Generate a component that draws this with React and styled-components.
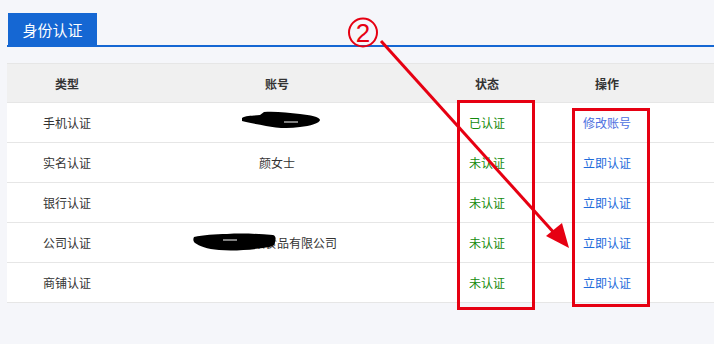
import React from 'react'
import styled, { createGlobalStyle } from 'styled-components'

const GlobalStyle = createGlobalStyle`
  html, body {
    margin: 0;
    padding: 0;
    background: #f5f6fa;
    font-family: "Noto Sans CJK SC", "Noto Sans", sans-serif;
  }
`

const Page = styled.div`
  position: relative;
  width: 714px;
  height: 344px;
  overflow: hidden;
  padding: 13px 0 0 7px;
  box-sizing: border-box;
`

const TabBar = styled.div`
  display: flex;
  border-bottom: 2px solid #1567d3;
`

const Tab = styled.div`
  width: 89px;
  height: 32px;
  margin-left: 1px;
  background: #1567d3;
  color: #fff;
  font-size: 15px;
  display: flex;
  align-items: center;
  justify-content: center;
`

const Table = styled.div`
  margin-top: 16px;
  width: 720px;
`

const Row = styled.div`
  display: grid;
  grid-template-columns: 120px 300px 120px 120px 1fr;
  height: 40px;
  align-items: center;
  background: ${p => (p.$head ? '#f0f0f0' : '#fff')};
  border-top: ${p => (p.$head ? '1px solid #e6e6e6' : 'none')};
  border-bottom: 1px solid #e6e6e6;
  box-sizing: border-box;
  font-size: 12px;
  font-weight: ${p => (p.$head ? 700 : 400)};
  color: #333;
`

const Cell = styled.div`
  text-align: center;
  position: relative;
  color: ${p => p.$color || 'inherit'};
`

const Hidden = styled.span`
  position: relative;
  display: inline-block;
`

const Blot = styled.svg`
  position: absolute;
  left: ${p => p.$left}px;
  top: ${p => p.$top}px;
`

const Overlay = styled.svg`
  position: absolute;
  left: 0;
  top: 0;
  pointer-events: none;
`

const GREEN = '#138a0c'
const BLUE = '#1d6bdb'

const rows = [
  { type: '手机认证', account: 'phone', state: '已认证', action: '修改账号', actionColor: '#4d6fe0' },
  { type: '实名认证', account: '颜女士', state: '未认证', action: '立即认证' },
  { type: '银行认证', account: '', state: '未认证', action: '立即认证' },
  { type: '公司认证', account: 'company', state: '未认证', action: '立即认证' },
  { type: '商铺认证', account: '', state: '未认证', action: '立即认证' },
]

const Account = ({ value }) => {
  if (value === 'phone') {
    return (
      <Hidden>
        <span style={{ color: '#fff' }}>18900000000</span>
        <Blot $left={0} $top={-4} width="82" height="20" viewBox="0 0 82 20">
          <path d="M2 8 C6 5 14 6 20 5 L24 2 C36 1 48 3 60 4 C70 5 80 7 80 10 C80 13 70 16 60 17 C48 19 36 18 26 16 C18 14 8 13 2 11 Z" fill="#000" />
          <path d="M44 12 L58 12" stroke="#fff" strokeWidth="1" />
        </Blot>
      </Hidden>
    )
  }
  if (value === 'company') {
    return (
      <Hidden>
        某某某某食品有限公司
        <Blot $left={-24} $top={-2} width="84" height="20" viewBox="0 0 84 20">
          <path d="M1 5 C10 3 22 2 34 2 C50 1 66 2 80 3 C83 4 83 7 82 10 C82 14 78 15 70 16 C56 18 40 19 26 18 C14 17 6 14 2 11 C0 9 0 7 1 5 Z" fill="#000" />
          <path d="M30 8 L44 8" stroke="#fff" strokeWidth="1" />
        </Blot>
      </Hidden>
    )
  }
  return value
}

export default function App() {
  return (
    <>
      <GlobalStyle />
      <Page>
        <TabBar>
          <Tab>身份认证</Tab>
        </TabBar>
        <Table>
          <Row $head>
            <Cell>类型</Cell>
            <Cell>账号</Cell>
            <Cell>状态</Cell>
            <Cell>操作</Cell>
            <Cell />
          </Row>
          {rows.map(r => (
            <Row key={r.type}>
              <Cell>{r.type}</Cell>
              <Cell><Account value={r.account} /></Cell>
              <Cell $color={GREEN}>{r.state}</Cell>
              <Cell $color={r.actionColor || BLUE}>{r.action}</Cell>
              <Cell />
            </Row>
          ))}
        </Table>
        <Overlay width="714" height="344" viewBox="0 0 714 344">
          <g fill="none" stroke="#e60012" strokeWidth="3">
            <rect x="458.5" y="101.5" width="75" height="207" />
            <rect x="573.5" y="109.5" width="75" height="196" />
            <line x1="381" y1="41" x2="556" y2="235" />
          </g>
          <circle cx="363" cy="32.5" r="14" fill="none" stroke="#e60012" strokeWidth="2" />
          <text x="363" y="42" fontSize="26" fill="#e60012" textAnchor="middle" fontFamily="Liberation Sans, sans-serif">2</text>
          <polygon points="569,248 546,236 562,223" fill="#e60012" />
        </Overlay>
      </Page>
    </>
  )
}
